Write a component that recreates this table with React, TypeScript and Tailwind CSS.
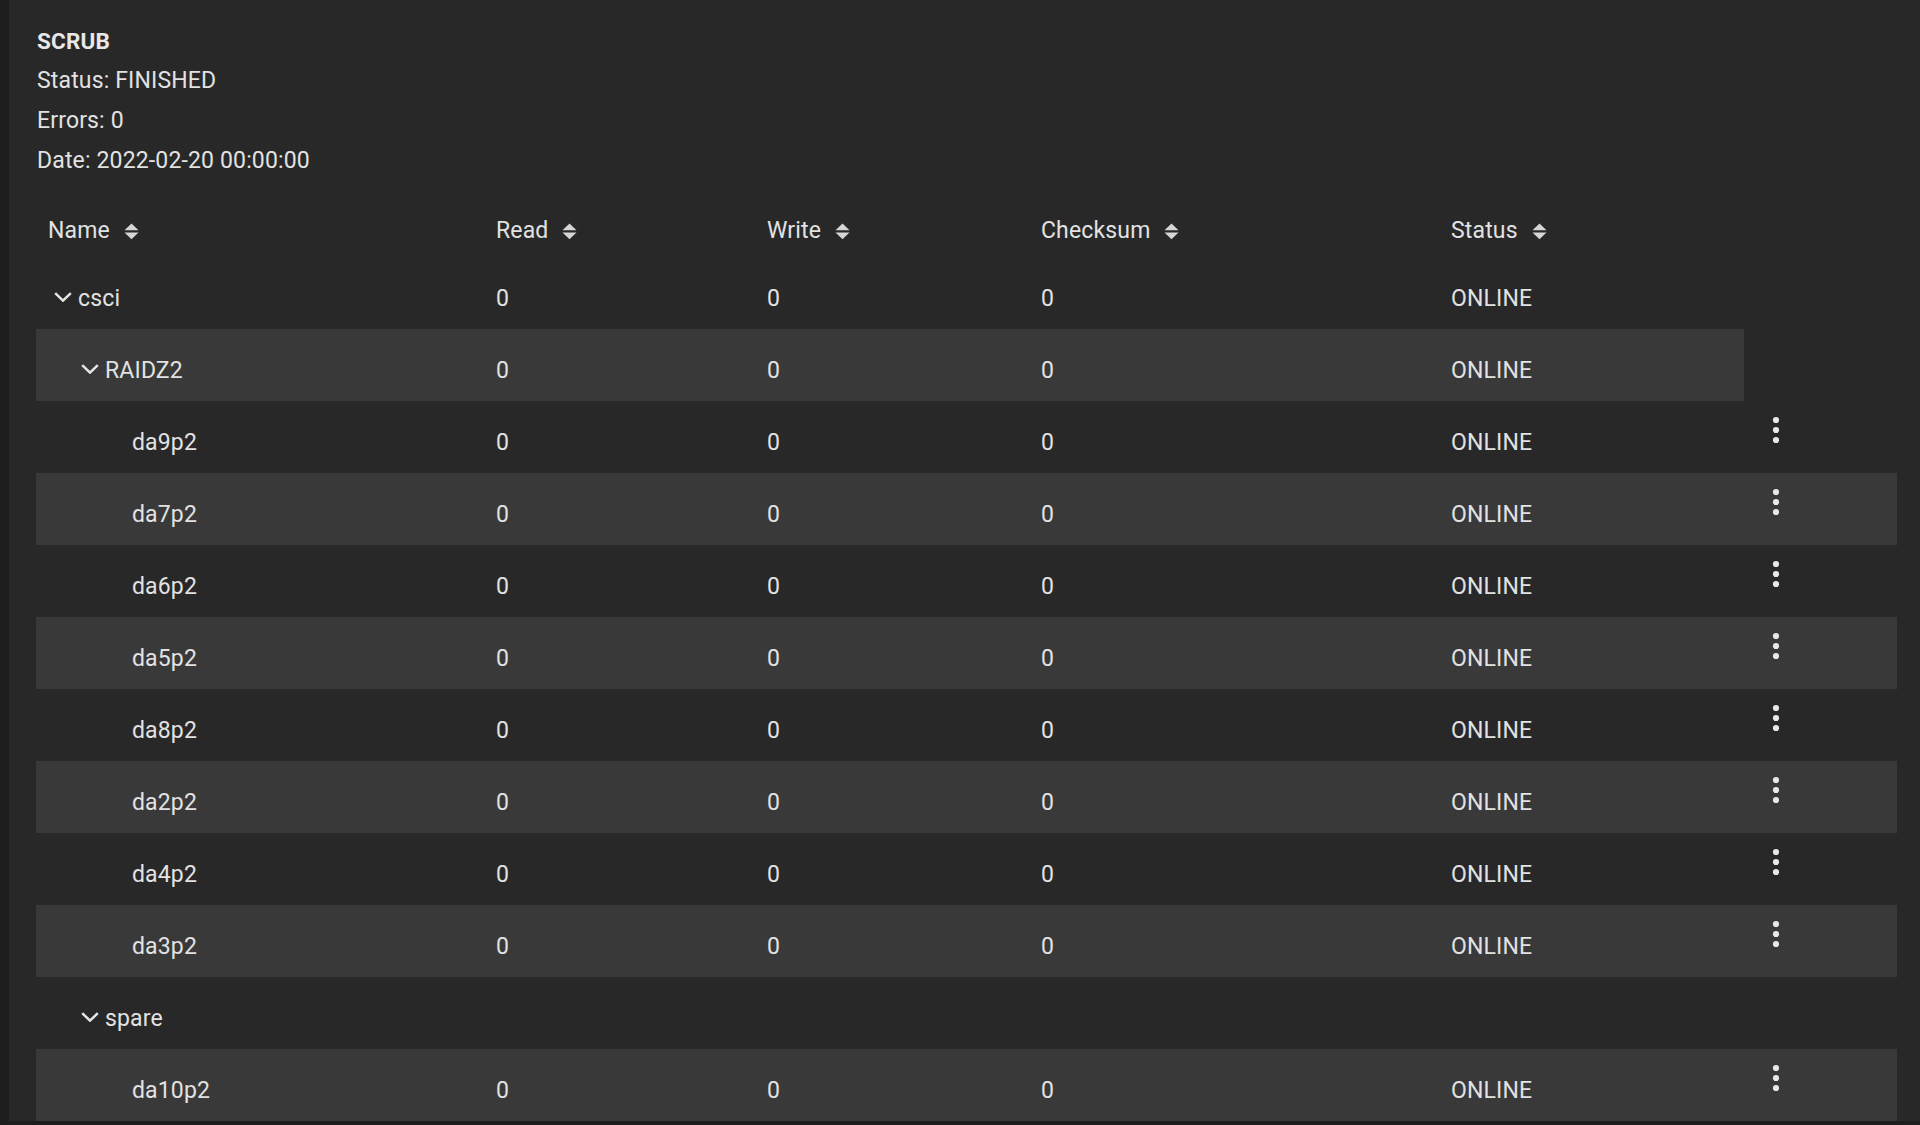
import React from "react";

type Row = {
  name: string;
  level: number;
  expandable?: boolean;
  values?: [string, string, string, string];
  actions?: boolean;
};

const rows: Row[] = [
  { name: "csci", level: 0, expandable: true, values: ["0", "0", "0", "ONLINE"] },
  { name: "RAIDZ2", level: 1, expandable: true, values: ["0", "0", "0", "ONLINE"] },
  { name: "da9p2", level: 2, values: ["0", "0", "0", "ONLINE"], actions: true },
  { name: "da7p2", level: 2, values: ["0", "0", "0", "ONLINE"], actions: true },
  { name: "da6p2", level: 2, values: ["0", "0", "0", "ONLINE"], actions: true },
  { name: "da5p2", level: 2, values: ["0", "0", "0", "ONLINE"], actions: true },
  { name: "da8p2", level: 2, values: ["0", "0", "0", "ONLINE"], actions: true },
  { name: "da2p2", level: 2, values: ["0", "0", "0", "ONLINE"], actions: true },
  { name: "da4p2", level: 2, values: ["0", "0", "0", "ONLINE"], actions: true },
  { name: "da3p2", level: 2, values: ["0", "0", "0", "ONLINE"], actions: true },
  { name: "spare", level: 1, expandable: true },
  { name: "da10p2", level: 2, values: ["0", "0", "0", "ONLINE"], actions: true },
];

function SortIcon() {
  return (
    <svg width="15" height="17" viewBox="0 0 15 17" className="ml-[14px] shrink-0">
      <polygon points="7.5,0.5 14.5,7.2 0.5,7.2" fill="#d6d6d6" />
      <polygon points="0.5,9.5 14.5,9.5 7.5,16.3" fill="#d6d6d6" />
    </svg>
  );
}

function Chevron() {
  return (
    <svg width="18" height="10" viewBox="0 0 18 10" className="shrink-0 mb-[3px]">
      <path d="M1.2 1.2 L9 8.6 L16.8 1.2" fill="none" stroke="#e6e6e6" strokeWidth="2.5" />
    </svg>
  );
}

function Kebab() {
  return (
    <svg width="8" height="28" viewBox="0 0 8 28">
      <circle cx="4" cy="4" r="3.1" fill="#e8e8e8" />
      <circle cx="4" cy="14" r="3.1" fill="#e8e8e8" />
      <circle cx="4" cy="24" r="3.1" fill="#e8e8e8" />
    </svg>
  );
}

const indentClass = ["pl-[18px]", "pl-[45px]", "pl-[72px]"];

export default function App() {
  return (
    <div className="w-[1920px] min-h-[1125px] bg-[#1e1e1e] flex items-start font-['Roboto','Liberation_Sans',sans-serif] text-[23px] tracking-[0.15px] text-[#e2e2e2]">
      <div className="ml-[9px] flex-1 bg-[#282828] pl-[27px] pr-[23px] pt-[21px]">
        <div className="pl-[1px]">
          <div className="font-bold leading-[40px] text-[#e8e8e8] text-[22.5px]">SCRUB</div>
          <div className="leading-[40px]">Status: FINISHED</div>
          <div className="leading-[40px]">Errors: 0</div>
          <div className="leading-[40px]">Date: 2022-02-20 00:00:00</div>
        </div>

        <div className="mt-[20px]">
          <div className="flex h-[56px] items-center pt-[4px] leading-[26px]">
            <div className="w-[448px] pl-[12px] flex items-center">
              <span>Name</span>
              <SortIcon />
            </div>
            <div className="w-[271px] pl-[12px] flex items-center">
              <span>Read</span>
              <SortIcon />
            </div>
            <div className="w-[274px] pl-[12px] flex items-center">
              <span>Write</span>
              <SortIcon />
            </div>
            <div className="w-[410px] pl-[12px] flex items-center">
              <span>Checksum</span>
              <SortIcon />
            </div>
            <div className="w-[305px] pl-[12px] flex items-center">
              <span>Status</span>
              <SortIcon />
            </div>
          </div>

          {rows.map((r, i) => (
            <div
              key={r.name}
              className={`flex h-[72px] items-center w-fit leading-[26px] ${
                i % 2 === 1 ? "bg-[#393939]" : ""
              }`}
            >
              <div className="flex items-center pt-[11px]">
                <div className={`w-[448px] flex items-center ${indentClass[r.level]}`}>
                  {r.expandable ? <Chevron /> : <span className="w-[18px] shrink-0" />}
                  <span className="ml-[6px]">{r.name}</span>
                </div>
                <div className="w-[271px] pl-[12px]">{r.values ? r.values[0] : ""}</div>
                <div className="w-[274px] pl-[12px]">{r.values ? r.values[1] : ""}</div>
                <div className="w-[410px] pl-[12px]">{r.values ? r.values[2] : ""}</div>
                <div className="w-[305px] pl-[12px]">{r.values ? r.values[3] : ""}</div>
              </div>
              {r.actions && (
                <div className="w-[153px] h-full flex items-center pl-[28px]">
                  <div className="mb-[14px] flex">
                    <Kebab />
                  </div>
                </div>
              )}
            </div>
          ))}
        </div>
      </div>
    </div>
  );
}
